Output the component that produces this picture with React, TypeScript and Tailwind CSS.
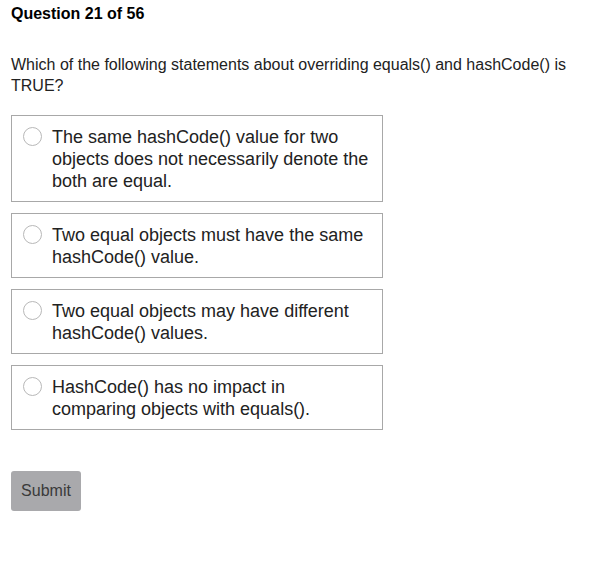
const OPTIONS = [
  'The same hashCode() value for two objects does not necessarily denote the both are equal.',
  'Two equal objects must have the same hashCode() value.',
  'Two equal objects may have different hashCode() values.',
  'HashCode() has no impact in comparing objects with equals().',
]

export default function App() {
  return (
    <div className="w-[597px] h-[582px] bg-white px-[11px] pt-[4px] font-['Liberation_Sans',Arial,sans-serif] text-black">
      <h2 className="text-[16px] font-bold leading-[20px]">Question 21 of 56</h2>
      <p className="mt-[30px] text-[16px] leading-[21px] text-[#222]">
        Which of the following statements about overriding equals() and hashCode() is TRUE?
      </p>
      <div className="mt-[19px] flex w-[372px] flex-col gap-[11px]">
        {OPTIONS.map((opt) => (
          <label
            key={opt}
            className="flex items-start gap-[10px] border border-[#a8a8a8] pl-[11px] pr-[10px] pt-[10px] pb-[9px] cursor-pointer"
          >
            <span className="mt-[1px] h-[19px] w-[19px] shrink-0 rounded-full border border-[#b8b8b8] bg-white" />
            <span className="text-[18px] leading-[22px] text-[#222]">{opt}</span>
          </label>
        ))}
      </div>
      <button className="mt-[41px] h-[40px] w-[70px] rounded-[3px] bg-[#a9a9ac] text-[16px] text-[#3a3a3a]">
        Submit
      </button>
    </div>
  )
}
